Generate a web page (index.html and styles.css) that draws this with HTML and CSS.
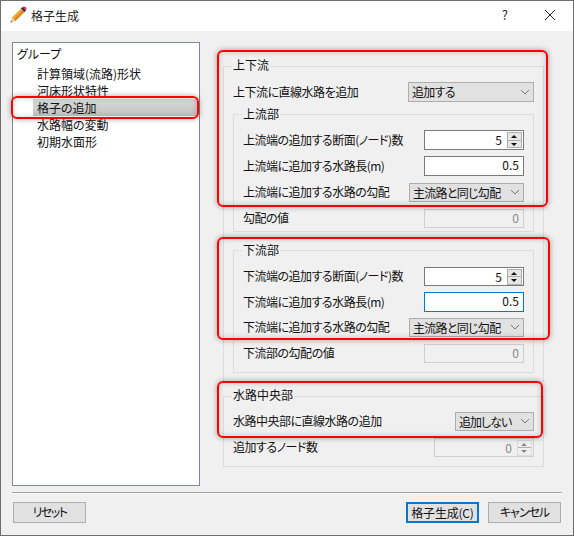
FILE: index.html
```html
<!DOCTYPE html>
<html lang="ja">
<head>
<meta charset="utf-8">
<title>格子生成</title>
<link rel="stylesheet" href="styles.css">
</head>
<body>
<div class="window">
  <header class="titlebar">
    <svg class="app-icon" width="18" height="18" viewBox="0 0 18 18">
      <path d="M1.5 16.5 L3 11.5 L6.5 15 Z" fill="#e8c9a0"/>
      <path d="M1.5 16.5 L2 14.8 L3.2 16 Z" fill="#444"/>
      <path d="M3 11.5 L12 2.5 L15.5 6 L6.5 15 Z" fill="#f3a83a"/>
      <path d="M4.6 13.1 L13.6 4.1 L15.5 6 L6.5 15 Z" fill="#e08a1e"/>
      <path d="M12 2.5 L13.5 1 L17 4.5 L15.5 6 Z" fill="#1f2a44"/>
      <path d="M13.5 1 L14.8 0.4 Q16 0.4 17.2 1.6 Q17.9 3 17 4.5 Z" fill="#e5263a"/>
    </svg>
    <span class="title">格子生成</span>
    <span class="help">?</span>
    <svg class="close" width="12" height="12" viewBox="0 0 12 12"><path d="M1 1 L11 11 M11 1 L1 11" stroke="#222" stroke-width="1" fill="none"/></svg>
  </header>
  <div class="content">
    <nav class="tree">
      <div class="tree-head">グループ</div>
      <div class="tree-item">計算領域(流路)形状</div>
      <div class="tree-item">河床形状特性</div>
      <div class="tree-item selected">格子の追加</div>
      <div class="tree-item">水路幅の変動</div>
      <div class="tree-item">初期水面形</div>
    </nav>
    <main class="pane">
      <section class="group outer">
        <div class="legend">上下流</div>
        <div class="row"><span class="label">上下流に直線水路を追加</span><div class="combo w126"><span>追加する</span><svg class="chev" width="10" height="6" viewBox="0 0 10 6"><path d="M1 1 L5 5 L9 1" stroke="#777" fill="none"/></svg></div></div>
        <section class="group inner g-up">
          <div class="legend">上流部</div>
          <div class="row"><span class="label">上流端の追加する断面(ノード)数</span><div class="spin"><span class="val">5</span><div class="spin-btns"><div class="up"></div><div class="down"></div></div></div></div>
          <div class="row mb7"><span class="label">上流端に追加する水路長(m)</span><div class="edit">0.5</div></div>
          <div class="row r19 mb7"><span class="label">上流端に追加する水路の勾配</span><div class="combo w116"><span>主流路と同じ勾配</span><svg class="chev" width="10" height="6" viewBox="0 0 10 6"><path d="M1 1 L5 5 L9 1" stroke="#777" fill="none"/></svg></div></div>
          <div class="row r19"><span class="label">勾配の値</span><div class="edit off">0</div></div>
        </section>
        <section class="group inner g-down">
          <div class="legend">下流部</div>
          <div class="row r19"><span class="label">下流端の追加する断面(ノード)数</span><div class="spin"><span class="val">5</span><div class="spin-btns"><div class="up"></div><div class="down"></div></div></div></div>
          <div class="row"><span class="label">下流端に追加する水路長(m)</span><div class="edit focus">0.5</div></div>
          <div class="row r19 mb7"><span class="label">下流端に追加する水路の勾配</span><div class="combo w116"><span>主流路と同じ勾配</span><svg class="chev" width="10" height="6" viewBox="0 0 10 6"><path d="M1 1 L5 5 L9 1" stroke="#777" fill="none"/></svg></div></div>
          <div class="row r19"><span class="label">下流部の勾配の値</span><div class="edit off">0</div></div>
        </section>
      </section>
      <section class="group middle">
        <div class="legend">水路中央部</div>
        <div class="row r19 mb7"><span class="label">水路中央部に直線水路の追加</span><div class="combo w79"><span>追加しない</span><svg class="chev" width="10" height="6" viewBox="0 0 10 6"><path d="M1 1 L5 5 L9 1" stroke="#777" fill="none"/></svg></div></div>
        <div class="row r19"><span class="label">追加するノード数</span><div class="spin off"><span class="val">0</span><div class="spin-btns"><div class="up"></div><div class="down"></div></div></div></div>
      </section>
    </main>
  </div>
  <footer class="footer">
    <button class="btn narrow">リセット</button>
    <div class="spacer"></div>
    <button class="btn primary">格子生成(C)</button>
    <button class="btn tight">キャンセル</button>
  </footer>
  <div class="mark m1"></div>
  <div class="mark m2"></div>
  <div class="mark m3"></div>
  <div class="mark m4"></div>
</div>
</body>
</html>
```

FILE: styles.css
```css
* { box-sizing: border-box; }
html, body { margin: 0; padding: 0; }
body {
  width: 574px; height: 536px; overflow: hidden;
  font-family: "Noto Sans CJK JP", "Noto Sans", sans-serif;
  font-size: 12px; color: #111;
  font-feature-settings: "palt";
}
.window {
  position: relative; width: 574px; height: 536px;
  background: #f0f0f0;
  border: 1px solid #6e6e6e;
  display: flex; flex-direction: column;
}
.titlebar {
  height: 30px; background: #fff;
  display: flex; align-items: center;
  padding: 0 17px 2px 8px; flex: none;
}
.app-icon { margin-right: 4px; }
.title { font-size: 12px; flex: 1; color: #222; line-height: 16px; margin-top: 1px; }
.help { font-size: 13px; margin: 0 36px 1px 0; color: #222; line-height: 14px; }
.content { flex: 1; display: flex; padding: 11px 0 0 11px; min-height: 0; }
.tree {
  width: 188px; height: 444px;
  background: #fff; border: 1px solid #828790;
  padding: 2px 0 0 4px; flex: none;
}
.tree-head { height: 20px; line-height: 18px; }
.tree-item { height: 17px; line-height: 17px; padding-left: 20px; }
.tree-item.selected { background: linear-gradient(#dadada, #c2c2c2); margin-left: 16px; padding-left: 4px; margin-right: 1px; }
.pane { padding: 24px 0 0 23px; width: 345px; }
.group { border: 1px solid #dcdcdc; position: relative; }
.legend {
  position: absolute; top: -10px; left: 8px;
  background: #f0f0f0; padding: 0 1px; height: 16px; line-height: 16px;
}
.inner .legend { top: -9px; }
.outer { width: 321px; height: 316px; padding: 15px 9px 0 9px; }
.inner { width: 301px; margin: 0; padding: 15px 9px 0 9px; }
.g-up { margin-top: 12px; height: 118px; }
.g-down { margin-top: 18px; height: 123px; padding-top: 16px; }
.middle { width: 321px; height: 71px; margin-top: 14px; padding: 15px 9px 0 9px; }
.row { display: flex; justify-content: space-between; align-items: center; height: 20px; margin-bottom: 6px; }
.r19 { height: 19px; }
.mb7 { margin-bottom: 7px; }
.label { letter-spacing: -0.5px; padding-bottom: 2px; }
.combo {
  height: 100%; background: #e1e1e1; border: 1px solid #adadad;
  display: flex; align-items: center; justify-content: space-between;
  padding: 0 3px 1px 3px; letter-spacing: -0.7px;
}
.w126 { width: 126px; }
.w116 { width: 115px; }
.w79 { width: 79px; letter-spacing: -1px; }
.edit, .spin {
  width: 100px; height: 100%; background: #fff; border: 1px solid #7a7a7a;
  text-align: right; line-height: 16px; padding-right: 4px;
}
.edit.focus { border-color: #0078d7; }
.edit.off { background: #f0f0f0; border-color: #cfcfcf; color: #8a8a8a; }
.spin { display: flex; justify-content: flex-end; align-items: center; padding-right: 1px; }
.spin .val { margin-right: 5px; }
.spin.off { background: #f0f0f0; border-color: #cfcfcf; color: #8a8a8a; }
.spin-btns { width: 15px; height: 16px; display: flex; flex-direction: column; border: 1px solid #adadad; }
.spin-btns .up, .spin-btns .down { flex: 1; background: #e6e6e6; position: relative; }
.spin-btns .up { border-bottom: 1px solid #adadad; }
.spin-btns .up::after, .spin-btns .down::after {
  content: ""; position: absolute; left: 3px; top: 2px; border-left: 3.5px solid transparent; border-right: 3.5px solid transparent;
}
.spin-btns .up::after { border-bottom: 3.5px solid #111; }
.spin-btns .down::after { border-top: 3.5px solid #111; }
.spin.off .spin-btns { border-color: #dcdcdc; }
.spin.off .spin-btns .up, .spin.off .spin-btns .down { background: #f0f0f0; }
.spin.off .spin-btns .up::after { border-bottom-color: #8a8a8a; }
.spin.off .spin-btns .down::after { border-top-color: #8a8a8a; }
.footer {
  flex: none; height: 43px; margin: 5px 11px 0 11px;
  border-top: 1px solid #a0a0a0;
  box-shadow: inset 0 1px 0 #fff;
  display: flex; align-items: flex-start; padding-top: 9px; gap: 8px;
}
.spacer { flex: 1; }
.btn {
  width: 73px; height: 21px; margin-left: 1px;
  font: inherit; color: #111; padding: 0 0 2px;
  background: #e1e1e1; border: 1px solid #adadad;
}
.btn.primary { border: 2px solid #0078d7; letter-spacing: -0.2px; }
.btn.narrow { letter-spacing: -1.5px; }
.btn.tight { letter-spacing: -1px; margin-right: 1px; }
.mark {
  position: absolute; border: 2px solid #f00; border-radius: 6px;
  box-shadow: 0 0 5px 1px rgba(0,0,0,.25), inset 0 0 5px 1px rgba(0,0,0,.15);
  pointer-events: none;
}
.m1 { left: 10px; top: 95px; width: 188px; height: 23px; }
.m2 { left: 216px; top: 49px; width: 331px; height: 157px; }
.m3 { left: 216px; top: 236px; width: 333px; height: 103px; }
.m4 { left: 216px; top: 380px; width: 326px; height: 57px; }
```
